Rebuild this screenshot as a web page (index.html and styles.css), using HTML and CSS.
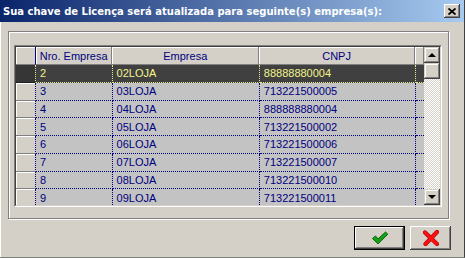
FILE: index.html
```html
<!DOCTYPE html>
<html lang="pt-BR">
<head>
  <meta charset="UTF-8" />
  <title>Licença</title>
  <link rel="stylesheet" href="styles.css">
</head>
<body>

<div class="window">
  <div class="titlebar">
    <span class="title">Sua chave de Licença será atualizada para seguinte(s) empresa(s):</span>
    <div class="close-btn">
      <svg width="8" height="7" viewBox="0 0 8 7"><path d="M0.5 0.5 L7.5 6.5 M7.5 0.5 L0.5 6.5" stroke="#000" stroke-width="1.8"/></svg>
    </div>
  </div>

  <div class="group">
    <div class="grid">
      <div class="grid-inner">
        <div class="grid-body">
          <div class="row head">
            <div class="cell ind"></div>
            <div class="cell c1">Nro. Empresa</div>
            <div class="cell c2">Empresa</div>
            <div class="cell c3">CNPJ</div>
            <div class="cell c4"></div>
          </div>
          <div class="row selected">
            <div class="cell ind"></div>
            <div class="cell c1">2</div>
            <div class="cell c2">02LOJA</div>
            <div class="cell c3">88888880004</div>
            <div class="cell c4"></div>
          </div>
          <div class="row">
            <div class="cell ind"></div>
            <div class="cell c1">3</div>
            <div class="cell c2">03LOJA</div>
            <div class="cell c3">713221500005</div>
            <div class="cell c4"></div>
          </div>
          <div class="row">
            <div class="cell ind"></div>
            <div class="cell c1">4</div>
            <div class="cell c2">04LOJA</div>
            <div class="cell c3">888888880004</div>
            <div class="cell c4"></div>
          </div>
          <div class="row">
            <div class="cell ind"></div>
            <div class="cell c1">5</div>
            <div class="cell c2">05LOJA</div>
            <div class="cell c3">713221500002</div>
            <div class="cell c4"></div>
          </div>
          <div class="row">
            <div class="cell ind"></div>
            <div class="cell c1">6</div>
            <div class="cell c2">06LOJA</div>
            <div class="cell c3">713221500006</div>
            <div class="cell c4"></div>
          </div>
          <div class="row">
            <div class="cell ind"></div>
            <div class="cell c1">7</div>
            <div class="cell c2">07LOJA</div>
            <div class="cell c3">713221500007</div>
            <div class="cell c4"></div>
          </div>
          <div class="row">
            <div class="cell ind"></div>
            <div class="cell c1">8</div>
            <div class="cell c2">08LOJA</div>
            <div class="cell c3">713221500010</div>
            <div class="cell c4"></div>
          </div>
          <div class="row">
            <div class="cell ind"></div>
            <div class="cell c1">9</div>
            <div class="cell c2">09LOJA</div>
            <div class="cell c3">713221500011</div>
            <div class="cell c4"></div>
          </div>
        </div>

        <div class="scrollbar">
          <div class="sb-btn"><span class="arrow-up"></span></div>
          <div class="sb-btn"></div>
          <div class="sb-track"></div>
          <div class="sb-btn"><span class="arrow-down"></span></div>
        </div>
      </div>
    </div>
  </div>

  <div class="actions">
    <div class="btn-default">
      <button class="btn btn-ok" type="button">
        <svg width="18" height="14" viewBox="0 0 18 14">
          <path d="M1.5 7.5 L4.5 5 L7 8 L14.5 1 L16.8 3.2 L7 12.8 Z" fill="#18a018" stroke="#006400" stroke-width="1" stroke-linejoin="round"/>
        </svg>
      </button>
    </div>
    <button class="btn btn-cancel" type="button">
      <svg width="16" height="16" viewBox="0 0 16 16">
        <path d="M2 2.5 L14 14 M14 2 L2.5 14" stroke="#b00000" stroke-width="4.2" stroke-linecap="round"/>
        <path d="M2 2.5 L14 14 M14 2 L2.5 14" stroke="#ff1010" stroke-width="3" stroke-linecap="round"/>
      </svg>
    </button>
  </div>
</div>

</body>
</html>
```

FILE: styles.css
```css
body {
  margin: 0;
  font-family: 'Liberation Sans', Arial, sans-serif;
  font-size: 11px;
  background-color: #d4d0c8;
}

.window {
  width: 465px;
  height: 258px;
  box-sizing: border-box;
  background-color: #d4d0c8;
  border-bottom: 1px solid #808080;
  border-right: 1px solid #404040;
  box-shadow: inset 1px 0 #ffffff;
  overflow: hidden;
}

.titlebar {
  height: 22px;
  display: flex;
  align-items: center;
  justify-content: space-between;
  padding: 0 4px 0 3px;
  background: linear-gradient(to right, #0a246a, #a6caf0);
}

.title {
  color: #fff;
  font-family: 'DejaVu Sans', sans-serif;
  font-weight: bold;
  font-size: 10px;
  letter-spacing: 0;
}

.close-btn {
  width: 16px;
  height: 14px;
  display: flex;
  align-items: center;
  justify-content: center;
  background-color: #d4d0c8;
  box-shadow: inset -1px -1px #404040, inset 1px 1px #ffffff, inset -2px -2px #808080;
}

/* etched frame */
.group {
  width: 441px;
  height: 188px;
  box-sizing: border-box;
  margin: 9px 0 0 8px;
  border: 1px solid #808080;
  box-shadow: 1px 1px 0 #ffffff, inset 1px 1px 0 #ffffff;
}

.grid {
  width: 428px;
  height: 162px;
  box-sizing: border-box;
  margin: 13px 0 0 5px;
  border: 1px solid;
  border-color: #808080 #ffffff #ffffff #808080;
}

.grid-inner {
  height: 100%;
  box-sizing: border-box;
  display: flex;
  border: 1px solid;
  border-color: #404040 #d4d0c8 #d4d0c8 #404040;
}

.grid-body {
  width: 408px;
  overflow: hidden;
  background-color: #c3c3c3;
}

.row {
  display: flex;
  height: 17.75px;
}

.cell {
  box-sizing: border-box;
  display: flex;
  align-items: center;
  padding: 0 4px;
  white-space: nowrap;
  overflow: hidden;
  color: #000080;
  border-right: 1px dotted #000080;
  border-bottom: 1px dotted #000080;
}

.ind { width: 20px; }
.c1 { width: 77px; }
.c2 { width: 148px; }
.c3 { width: 157px; }
.c4 { width: 6px; border-right: none; }

.row .ind {
  background-color: #d4d0c8;
  border-bottom: 1px solid #808080;
  box-shadow: inset 1px 1px #ffffff;
}

.head { height: 18px; }

.head .cell {
  justify-content: center;
  background-color: #d4d0c8;
  border-right: 1px solid #808080;
  border-bottom: 1px solid #808080;
  box-shadow: inset 1px 1px #ffffff;
}

.head .ind { border-right: 1px solid #000080; }

.selected { background-color: #404040; }

.selected .cell {
  color: #f4f48c;
  border-color: #e8e890;
}

.selected .c4 { border-right: none; }

.row.selected .ind {
  background-color: #363636;
  box-shadow: none;
  border-right-color: #e8e890;
  border-bottom-color: #202020;
}

.scrollbar {
  width: 16px;
  display: flex;
  flex-direction: column;
}

.sb-btn {
  height: 16px;
  flex-shrink: 0;
  display: flex;
  align-items: center;
  justify-content: center;
  background-color: #d4d0c8;
  box-shadow: inset -1px -1px #404040, inset 1px 1px #d4d0c8, inset -2px -2px #808080, inset 2px 2px #ffffff;
}

.sb-track {
  flex: 1;
  background: repeating-conic-gradient(#ffffff 0 25%, #d4d0c8 0 50%) 0 0 / 2px 2px;
}

.arrow-up, .arrow-down {
  width: 0;
  height: 0;
  border-left: 4px solid transparent;
  border-right: 4px solid transparent;
}

.arrow-up { border-bottom: 4px solid #000; }
.arrow-down { border-top: 4px solid #000; }

.actions {
  display: flex;
  justify-content: flex-end;
  gap: 5px;
  margin: 7px 13px 0 0;
}

.btn-default {
  border: 1px solid #000;
  display: flex;
}

.btn {
  display: flex;
  align-items: center;
  justify-content: center;
  padding: 0;
  border: none;
  background-color: #d4d0c8;
  box-shadow: inset -1px -1px #404040, inset 1px 1px #ffffff, inset -2px -2px #808080;
}

.btn-ok {
  width: 49px;
  height: 22px;
}

.btn-cancel {
  width: 41px;
  height: 24px;
}
```
